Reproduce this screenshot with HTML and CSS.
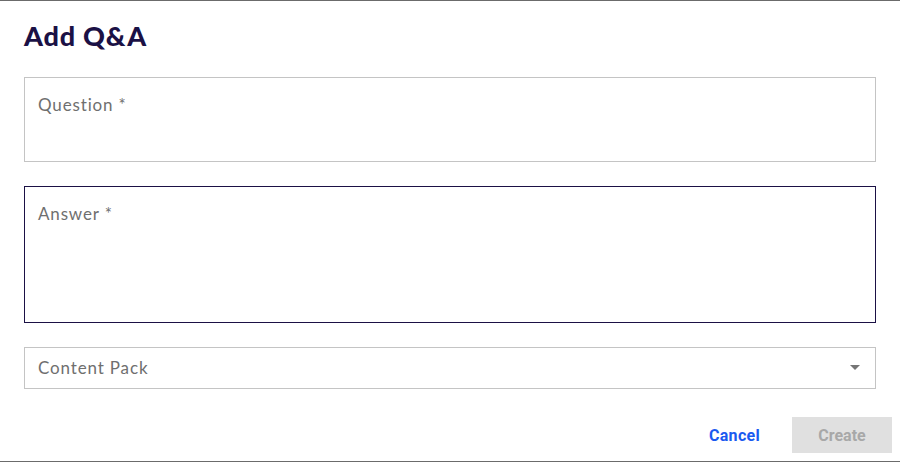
FILE: index.html
```html
<!DOCTYPE html>
<html>
<head>
<meta charset="utf-8">
<link rel="stylesheet" href="styles.css">
</head>
<body>
<div class="dialog">
  <h1 class="title">Add Q&amp;A</h1>
  <div class="field field-question"><span class="label">Question *</span></div>
  <div class="field field-answer focused"><span class="label">Answer *</span></div>
  <div class="field field-select">
    <span class="label">Content Pack</span>
    <svg class="caret" width="10" height="5" viewBox="0 0 10 5"><path d="M0 0L10 0L5 5Z" fill="#757575"/></svg>
  </div>
  <div class="actions">
    <button class="btn btn-text">Cancel</button>
    <button class="btn btn-disabled">Create</button>
  </div>
</div>
</body>
</html>
```
FILE: styles.css
```css
html, body {
  margin: 0;
  padding: 0;
}
body {
  width: 900px;
  height: 462px;
  background: #6b6b6b;
  padding-top: 1px;
  box-sizing: border-box;
  overflow: hidden;
}
.dialog {
  background: #ffffff;
  height: 460px;
  box-sizing: border-box;
  padding: 18px 24px 0 24px;
  display: flex;
  flex-direction: column;
}
.title {
  margin: 0;
  font-family: Lato, "Liberation Sans", sans-serif;
  font-weight: 900;
  font-size: 27px;
  line-height: 34px;
  color: #1b1145;
  letter-spacing: 0.8px;
}
.field {
  box-sizing: border-box;
  border: 1px solid #c4c4c4;
  padding: 0 13px;
  font-family: Lato, "Open Sans", sans-serif;
  font-size: 17px;
  color: #6f6f6f;
}
.label {
  letter-spacing: 0.85px;
}
.field-question {
  margin-top: 24px;
  height: 85px;
  padding-top: 16px;
}
.field-answer {
  margin-top: 24px;
  height: 137px;
  padding-top: 16px;
}
.focused {
  border-color: #1b1145;
}
.field-select {
  margin-top: 24px;
  height: 42px;
  display: flex;
  align-items: center;
  justify-content: space-between;
  padding-right: 15px;
  padding-bottom: 1px;
}
.caret {
  display: block;
}
.actions {
  display: flex;
  justify-content: flex-end;
  align-items: center;
  gap: 22px;
  margin-top: 28px;
  margin-right: -16px;
}
.btn {
  border: none;
  font-family: Roboto, "Liberation Sans", sans-serif;
  font-weight: 700;
  font-size: 16px;
  height: 36px;
  padding: 0 16px;
  background: transparent;
}
.btn-text {
  color: #1a5af0;
  padding: 0 10px;
  letter-spacing: 0.3px;
}
.btn-disabled {
  background: #e0e0e0;
  color: #a8a8a8;
  width: 100px;
}
```
